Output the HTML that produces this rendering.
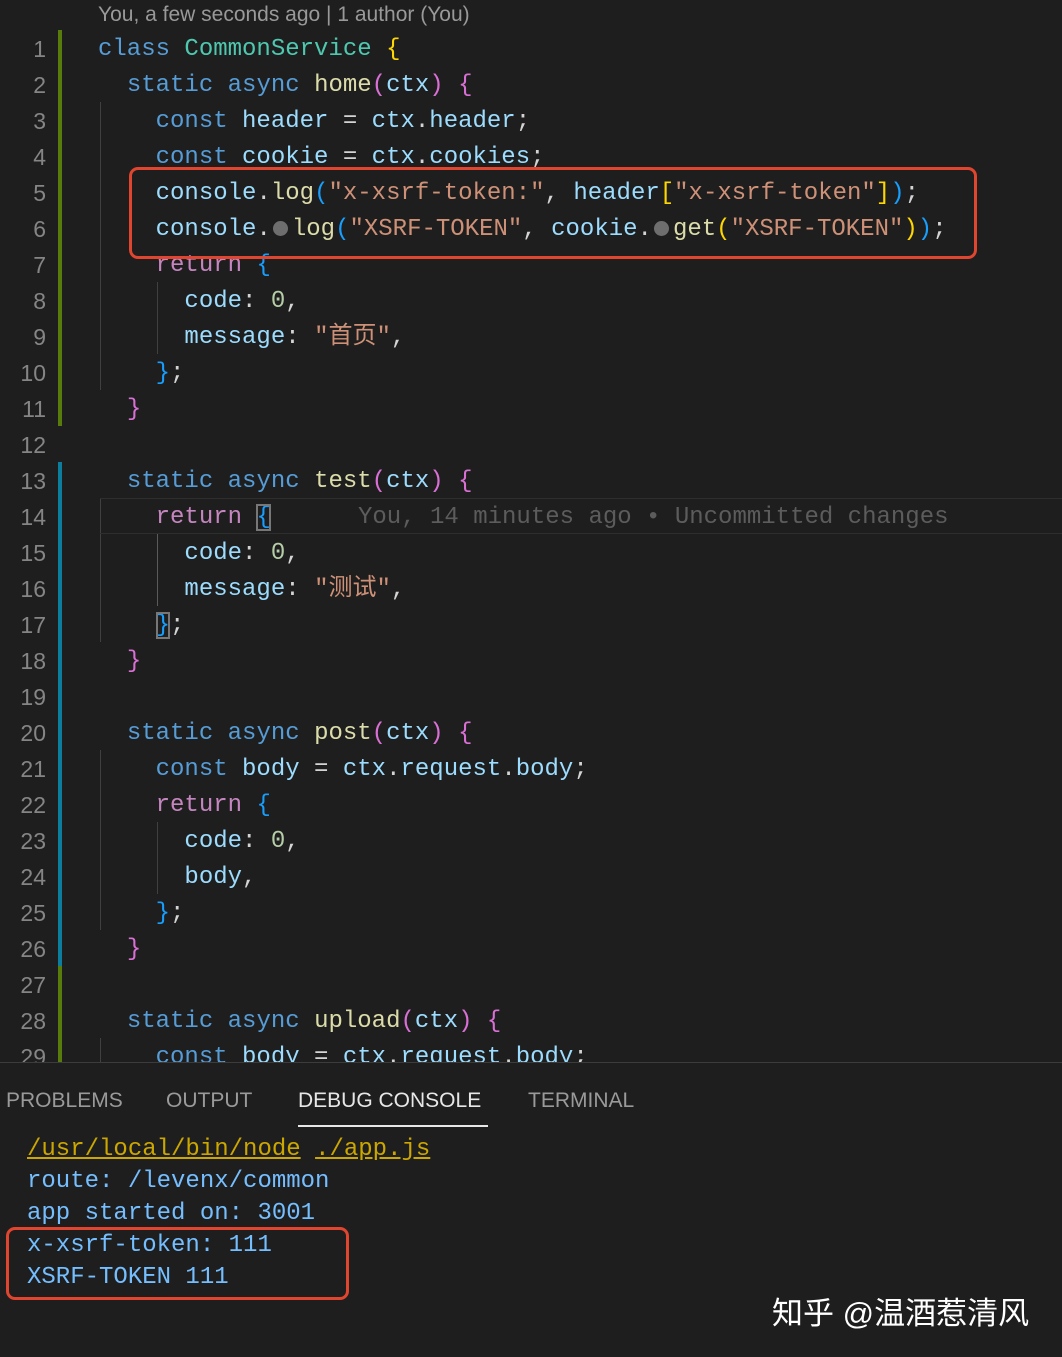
<!DOCTYPE html>
<html><head><meta charset="utf-8"><style>
body{margin:0;width:1062px;height:1356px;background:#1e1e1e;overflow:hidden;position:relative;font-family:"Liberation Mono","Noto Sans CJK SC",monospace;}
.l{position:absolute;left:98px;height:36px;line-height:36px;font-size:24px;white-space:pre;color:#d4d4d4;margin-top:2px}
.n{position:absolute;left:0;width:46px;text-align:right;height:36px;line-height:36px;font-size:23px;color:#858585;font-family:"Liberation Sans",sans-serif;margin-top:1px}
.k{color:#569cd6}.r{color:#c586c0}.v{color:#9cdcfe}.f{color:#dcdcaa}.c{color:#4ec9b0}.s{color:#ce9178}.num{color:#b5cea8}
.y{color:#ffd700}.p{color:#da70d6}.b{color:#179fff}
.dot{display:inline-block;width:15px;height:15px;border-radius:50%;background:#6e6e6e;margin:0 4px 0 2px;vertical-align:-1px}
.g{position:absolute;width:4px;}
.ig{position:absolute;width:1px;background:#404040;}
.box{position:absolute;border:3px solid #e0452f;border-radius:9px;}
.tab{position:absolute;top:1089px;font-family:"Liberation Sans",sans-serif;font-size:21px;color:#9a9a9a;}
.cl{position:absolute;left:27px;font-size:24px;height:32px;line-height:32px;color:#75beff;white-space:pre;margin-top:2px}
</style></head><body>
<div style="position:absolute;left:98px;top:3px;font-family:'Liberation Sans',sans-serif;font-size:21px;color:#999">You, a few seconds ago | 1 author (You)</div>
<div class="g" style="left:58px;top:30px;height:396px;background:#587c0c"></div>
<div class="g" style="left:58px;top:462px;height:504px;background:#0c7d9d"></div>
<div class="g" style="left:58px;top:966px;height:96px;background:#587c0c"></div>
<div class="ig" style="left:100px;top:102px;height:288px"></div>
<div class="ig" style="left:157px;top:282px;height:72px"></div>
<div class="ig" style="left:100px;top:498px;height:144px"></div>
<div class="ig" style="left:157px;top:534px;height:72px;background:#5a5a5a"></div>
<div class="ig" style="left:100px;top:750px;height:180px"></div>
<div class="ig" style="left:157px;top:822px;height:72px"></div>
<div class="ig" style="left:100px;top:1038px;height:24px"></div>
<div style="position:absolute;left:100px;top:498px;width:962px;height:34px;border-top:1px solid #2e2e2e;border-bottom:1px solid #2e2e2e"></div>

<div class="n" style="top:30px">1</div><div class="l" style="top:30px"><span class="k">class</span> <span class="c">CommonService</span> <span class="y">{</span></div>
<div class="n" style="top:66px">2</div><div class="l" style="top:66px">  <span class="k">static</span> <span class="k">async</span> <span class="f">home</span><span class="p">(</span><span class="v">ctx</span><span class="p">)</span> <span class="p">{</span></div>
<div class="n" style="top:102px">3</div><div class="l" style="top:102px">    <span class="k">const</span> <span class="v">header</span> = <span class="v">ctx</span>.<span class="v">header</span>;</div>
<div class="n" style="top:138px">4</div><div class="l" style="top:138px">    <span class="k">const</span> <span class="v">cookie</span> = <span class="v">ctx</span>.<span class="v">cookies</span>;</div>
<div class="n" style="top:174px">5</div><div class="l" style="top:174px">    <span class="v">console</span>.<span class="f">log</span><span class="b">(</span><span class="s">"x-xsrf-token:"</span>, <span class="v">header</span><span class="y">[</span><span class="s">"x-xsrf-token"</span><span class="y">]</span><span class="b">)</span>;</div>
<div class="n" style="top:210px">6</div><div class="l" style="top:210px">    <span class="v">console</span>.<span class="dot"></span><span class="f">log</span><span class="b">(</span><span class="s">"XSRF-TOKEN"</span>, <span class="v">cookie</span>.<span class="dot"></span><span class="f">get</span><span class="y">(</span><span class="s">"XSRF-TOKEN"</span><span class="y">)</span><span class="b">)</span>;</div>
<div class="n" style="top:246px">7</div><div class="l" style="top:246px">    <span class="r">return</span> <span class="b">{</span></div>
<div class="n" style="top:282px">8</div><div class="l" style="top:282px">      <span class="v">code</span>: <span class="num">0</span>,</div>
<div class="n" style="top:318px">9</div><div class="l" style="top:318px">      <span class="v">message</span>: <span class="s">"首页"</span>,</div>
<div class="n" style="top:354px">10</div><div class="l" style="top:354px">    <span class="b">}</span>;</div>
<div class="n" style="top:390px">11</div><div class="l" style="top:390px">  <span class="p">}</span></div>
<div class="n" style="top:426px">12</div>
<div class="n" style="top:462px">13</div><div class="l" style="top:462px">  <span class="k">static</span> <span class="k">async</span> <span class="f">test</span><span class="p">(</span><span class="v">ctx</span><span class="p">)</span> <span class="p">{</span></div>
<div class="n" style="top:498px">14</div><div class="l" style="top:498px">    <span class="r">return</span> <span class="b" style="outline:2px solid #777;outline-offset:-2px">{</span><span style="position:absolute;left:260px;color:#5c5c5c">You, 14 minutes ago • Uncommitted changes</span></div>
<div class="n" style="top:534px">15</div><div class="l" style="top:534px">      <span class="v">code</span>: <span class="num">0</span>,</div>
<div class="n" style="top:570px">16</div><div class="l" style="top:570px">      <span class="v">message</span>: <span class="s">"测试"</span>,</div>
<div class="n" style="top:606px">17</div><div class="l" style="top:606px">    <span class="b" style="outline:2px solid #777;outline-offset:-2px">}</span>;</div>
<div class="n" style="top:642px">18</div><div class="l" style="top:642px">  <span class="p">}</span></div>
<div class="n" style="top:678px">19</div>
<div class="n" style="top:714px">20</div><div class="l" style="top:714px">  <span class="k">static</span> <span class="k">async</span> <span class="f">post</span><span class="p">(</span><span class="v">ctx</span><span class="p">)</span> <span class="p">{</span></div>
<div class="n" style="top:750px">21</div><div class="l" style="top:750px">    <span class="k">const</span> <span class="v">body</span> = <span class="v">ctx</span>.<span class="v">request</span>.<span class="v">body</span>;</div>
<div class="n" style="top:786px">22</div><div class="l" style="top:786px">    <span class="r">return</span> <span class="b">{</span></div>
<div class="n" style="top:822px">23</div><div class="l" style="top:822px">      <span class="v">code</span>: <span class="num">0</span>,</div>
<div class="n" style="top:858px">24</div><div class="l" style="top:858px">      <span class="v">body</span>,</div>
<div class="n" style="top:894px">25</div><div class="l" style="top:894px">    <span class="b">}</span>;</div>
<div class="n" style="top:930px">26</div><div class="l" style="top:930px">  <span class="p">}</span></div>
<div class="n" style="top:966px">27</div>
<div class="n" style="top:1002px">28</div><div class="l" style="top:1002px">  <span class="k">static</span> <span class="k">async</span> <span class="f">upload</span><span class="p">(</span><span class="v">ctx</span><span class="p">)</span> <span class="p">{</span></div>
<div class="n" style="top:1038px">29</div><div class="l" style="top:1038px">    <span class="k">const</span> <span class="v">body</span> = <span class="v">ctx</span>.<span class="v">request</span>.<span class="v">body</span>;</div>

<div class="box" style="left:129px;top:167px;width:842px;height:86px"></div>

<div style="position:absolute;left:0;top:1062px;width:1062px;height:294px;background:#1e1e1e;border-top:1px solid #3c3c3c"></div>
<div class="tab" style="left:6px">PROBLEMS</div>
<div class="tab" style="left:166px">OUTPUT</div>
<div class="tab" style="left:298px;color:#e7e7e7">DEBUG CONSOLE</div>
<div style="position:absolute;left:298px;top:1125px;width:190px;height:2px;background:#e7e7e7"></div>
<div class="tab" style="left:528px">TERMINAL</div>
<div class="cl" style="top:1132px;color:#cca700"><u>/usr/local/bin/node</u> <u>./app.js</u></div>
<div class="cl" style="top:1164px">route: /levenx/common</div>
<div class="cl" style="top:1196px">app started on: 3001</div>
<div class="cl" style="top:1228px">x-xsrf-token: 111</div>
<div class="cl" style="top:1260px">XSRF-TOKEN 111</div>
<div class="box" style="left:6px;top:1227px;width:337px;height:67px"></div>
<div style="position:absolute;left:772px;top:1288px;font-family:'Liberation Sans','Noto Sans CJK SC',sans-serif;font-size:31px;color:#fff">知乎 @温酒惹清风</div>
</body></html>
